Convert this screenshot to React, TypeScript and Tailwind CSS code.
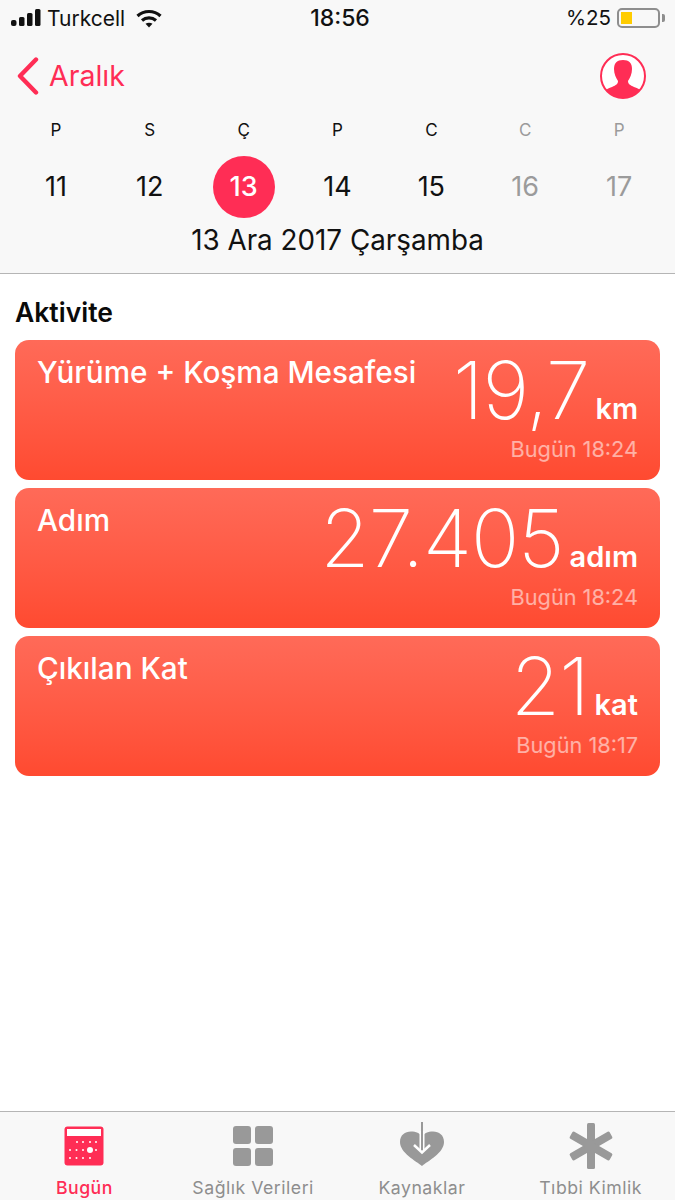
import React from "react";

const days = [
  { letter: "P", num: "11" },
  { letter: "S", num: "12" },
  { letter: "Ç", num: "13", active: true },
  { letter: "P", num: "14" },
  { letter: "C", num: "15" },
  { letter: "C", num: "16", muted: true },
  { letter: "P", num: "17", muted: true },
];

const cards = [
  { title: "Yürüme + Koşma Mesafesi", value: "19,7", unit: "km", time: "Bugün 18:24" },
  { title: "Adım", value: "27.405", unit: "adım", time: "Bugün 18:24" },
  { title: "Çıkılan Kat", value: "21", unit: "kat", time: "Bugün 18:17" },
];

function TodayIcon() {
  const dots = [
    [13, 16], [19, 16], [26, 16], [32, 16],
    [6, 24], [12.5, 24], [19, 24], [32, 24],
    [6, 32], [12.5, 32], [19, 32], [26, 32],
  ];
  return (
    <svg width="40" height="40" viewBox="0 0 40 40">
      <rect x="0.5" y="0.5" width="39" height="39" rx="3" fill="#ff2d55" />
      <rect x="3" y="3" width="34" height="7" fill="#fff" />
      {dots.map(([x, y], i) => (
        <circle key={i} cx={x} cy={y} r="1" fill="#fff" />
      ))}
      <circle cx="26" cy="24" r="3" fill="#fff" />
    </svg>
  );
}

function DataIcon() {
  return (
    <svg width="40" height="40" viewBox="0 0 40 40" fill="#999">
      <rect x="0" y="0" width="18" height="18" rx="3" />
      <rect x="22" y="0" width="18" height="18" rx="3" />
      <rect x="0" y="22" width="18" height="18" rx="3" />
      <rect x="22" y="22" width="18" height="18" rx="3" />
    </svg>
  );
}

function SourcesIcon() {
  return (
    <svg className="mb-[4px]" width="46" height="44" viewBox="0 0 46 44">
      <path
        d="M23 44 C17 39 1 31 1 20 C1 13 6 9.5 12 9.5 C17 9.5 21 11 23 15 C25 11 29 9.5 34 9.5 C40 9.5 45 13 45 20 C45 31 29 39 23 44 Z"
        fill="#999"
      />
      <path d="M23 9 V28" stroke="#fff" strokeWidth="5" />
      <path d="M23 0 V29" stroke="#999" strokeWidth="2" />
      <path d="M15 23 L23 30.5 L31 23" stroke="#fff" strokeWidth="2.5" fill="none" />
    </svg>
  );
}

function MedicalIcon() {
  return (
    <svg width="44" height="46" viewBox="0 0 44 46" fill="#999">
      <rect x="18" y="0" width="8" height="46" rx="1.5" />
      <rect x="18" y="0" width="8" height="46" rx="1.5" transform="rotate(60 22 23)" />
      <rect x="18" y="0" width="8" height="46" rx="1.5" transform="rotate(120 22 23)" />
    </svg>
  );
}

const tabs = [
  { label: "Bugün", icon: <TodayIcon />, active: true },
  { label: "Sağlık Verileri", icon: <DataIcon /> },
  { label: "Kaynaklar", icon: <SourcesIcon /> },
  { label: "Tıbbi Kimlik", icon: <MedicalIcon /> },
];

export default function App() {
  return (
    <div className="w-[675px] h-[1200px] bg-white flex flex-col overflow-hidden font-['Inter',sans-serif]">
      {/* header */}
      <div className="h-[274px] shrink-0 bg-[#f8f8f8] border-b border-[#b5b5b5]">
        {/* status bar */}
        <div className="h-[36px] pl-[11px] pr-[10px] grid grid-cols-3 items-center text-[#111]">
          <div className="flex items-center">
            <svg width="30" height="18" viewBox="0 0 30 18" fill="#111">
              <rect x="0" y="11" width="5.5" height="6" rx="2" />
              <rect x="8" y="8" width="5.5" height="9" rx="1.5" />
              <rect x="16" y="4" width="5.5" height="13" rx="1.5" />
              <rect x="24" y="0" width="5.5" height="17" rx="1.5" />
            </svg>
            <span className="ml-[6px] text-[21px] leading-none">Turkcell</span>
            <svg className="ml-[11px]" width="26" height="19" viewBox="0 0 26 19" fill="none" stroke="#111" strokeWidth="3.2">
              <path d="M1.5 7 C8 1 18 1 24.5 7" />
              <path d="M6 11.5 C10 8 16 8 20 11.5" />
              <path d="M13 18.5 L9.5 14.8 C11.5 13.3 14.5 13.3 16.5 14.8 Z" fill="#111" stroke="none" />
            </svg>
          </div>
          <div className="pl-[4px] text-center text-[23px] font-medium leading-none">18:56</div>
          <div className="flex items-center justify-end">
            <span className="text-[20.5px] leading-none">%25</span>
            <div className="ml-[6px] w-[43px] h-[20px] border-2 border-[#8e8e8e] rounded-[5px] p-[2px]">
              <div className="w-[11px] h-full bg-[#ffcc00]" />
            </div>
            <div className="ml-[2px] w-[3px] h-[8px] bg-[#8e8e8e] rounded-r-[2px]" />
          </div>
        </div>

        {/* nav row */}
        <div className="mt-[3px] h-[74px] pl-[17px] pr-[29px] flex items-center justify-between">
          <div className="flex items-center">
            <svg width="22" height="38" viewBox="0 0 22 38" fill="none" stroke="#ff2d55" strokeWidth="4.4" strokeLinecap="round" strokeLinejoin="round">
              <path d="M19 2.5 L3 19 L19 35.5" />
            </svg>
            <span className="ml-[10px] text-[28.5px] text-[#ff2d55] leading-none">Aralık</span>
          </div>
          <svg width="46" height="46" viewBox="0 0 46 46">
            <circle cx="23" cy="23" r="22" fill="#fff" stroke="#ff2d55" strokeWidth="2" />
            <path
              d="M23 7 C29 7 32 10 32 16 C32 21 30 25 28 28 C28 31 30 32 34 34 C37 35 39 36 40 37 C36 42 30 45 23 45 C16 45 10 42 6 37 C7 36 9 35 12 34 C16 32 18 31 18 28 C16 25 14 21 14 16 C14 10 17 7 23 7 Z"
              fill="#ff2d55"
            />
          </svg>
        </div>

        {/* week */}
        <div className="pt-[7px] px-[9px] grid grid-cols-7">
          {days.map((d) => (
            <div key={d.num} className="flex flex-col items-center">
              <span className={`text-[17px] leading-[20px] ${d.muted ? "text-[#9b9b9b]" : "text-[#111]"}`}>
                {d.letter}
              </span>
              <div
                className={`mt-[16px] w-[62px] h-[62px] rounded-full flex items-center justify-center text-[27px] ${
                  d.active ? "bg-[#ff2d55] text-white font-medium" : d.muted ? "text-[#9b9b9b]" : "text-[#111]"
                }`}
              >
                {d.num}
              </div>
            </div>
          ))}
        </div>

        <div className="mt-[2px] text-center text-[27.8px] leading-[40px] text-[#111]">13 Ara 2017 Çarşamba</div>
      </div>

      {/* content */}
      <div className="flex-1 px-[15px]">
        <h2 className="mt-[22px] text-[26.5px] leading-[32px] font-semibold text-[#0a0a0a]">Aktivite</h2>
        <div className="mt-[12px] flex flex-col gap-[8px]">
          {cards.map((c) => (
            <div
              key={c.title}
              className="h-[140px] rounded-[14px] bg-gradient-to-b from-[#ff6a58] to-[#ff4a30] px-[22px] flex justify-between text-white"
            >
              <div className="pt-[13px] text-[29.7px] leading-[38px] font-medium whitespace-nowrap">{c.title}</div>
              <div className="flex flex-col items-end">
                <div className="flex items-baseline h-[99px]">
                  <span className="text-[80px] leading-[99px] font-[250] tracking-[-1px]">{c.value}</span>
                  <span className="ml-[6px] text-[29px] leading-none font-semibold">{c.unit}</span>
                </div>
                <div className="-mt-[2px] text-[21.7px] leading-[24px] text-white/55">{c.time}</div>
              </div>
            </div>
          ))}
        </div>
      </div>

      {/* tab bar */}
      <div className="h-[89px] shrink-0 bg-[#f8f8f8] border-t border-[#b5b5b5] grid grid-cols-4">
        {tabs.map((t) => (
          <div key={t.label} className="flex flex-col items-center">
            <div className="h-[68px] flex items-center justify-center">{t.icon}</div>
            <span className={`-mt-[2px] text-[17.7px] leading-[20px] tracking-[0.5px] ${t.active ? "text-[#ff2d55] font-medium" : "text-[#8e8e8e]"}`}>
              {t.label}
            </span>
          </div>
        ))}
      </div>
    </div>
  );
}
